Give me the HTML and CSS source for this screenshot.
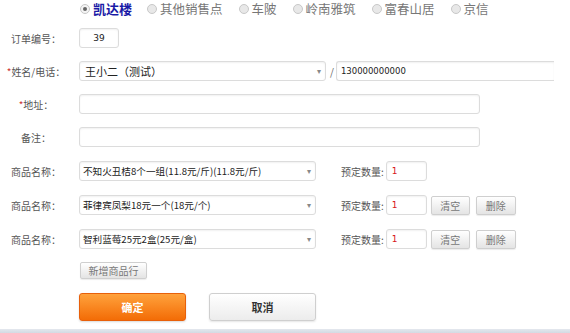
FILE: index.html
```html
<!DOCTYPE html>
<html lang="zh-CN">
<head>
    <meta charset="UTF-8">
    <meta name="viewport" content="width=device-width, initial-scale=1.0">
    <title>订单录入</title>
    <link rel="stylesheet" href="styles.css">
</head>
<body>
    <div class="order-page">
        <div class="shops">
            <label class="shop shop-on"><span class="radio"></span>凯达楼</label>
            <label class="shop"><span class="radio"></span>其他销售点</label>
            <label class="shop"><span class="radio"></span>车陂</label>
            <label class="shop"><span class="radio"></span>岭南雅筑</label>
            <label class="shop"><span class="radio"></span>富春山居</label>
            <label class="shop"><span class="radio"></span>京信</label>
        </div>

        <div class="row row-first">
            <span class="label">订单编号：</span>
            <div class="field field-no">39</div>
        </div>
        <div class="row">
            <span class="label"><i class="star">*</i>姓名/电话：</span>
            <div class="field select select-name">王小二（测试）<span class="arrow">▾</span></div>
            <span class="slash">/</span>
            <div class="field field-phone">130000000000</div>
        </div>
        <div class="row">
            <span class="label"><i class="star">*</i>地址：</span>
            <div class="field field-wide"></div>
        </div>
        <div class="row">
            <span class="label">备注：</span>
            <div class="field field-wide"></div>
        </div>

        <div class="row row-goods">
            <span class="label">商品名称：</span>
            <div class="field select select-goods">不知火丑桔8个一组(11.8元/斤)(11.8元/斤)<span class="arrow">▾</span></div>
            <span class="qty-label">预定数量:</span>
            <div class="field field-qty">1</div>
        </div>
        <div class="row row-goods">
            <span class="label">商品名称：</span>
            <div class="field select select-goods">菲律宾凤梨18元一个(18元/个)<span class="arrow">▾</span></div>
            <span class="qty-label">预定数量:</span>
            <div class="field field-qty">1</div>
            <button class="btn-small">清空</button>
            <button class="btn-small">删除</button>
        </div>
        <div class="row row-goods">
            <span class="label">商品名称：</span>
            <div class="field select select-goods">智利蓝莓25元2盒(25元/盒)<span class="arrow">▾</span></div>
            <span class="qty-label">预定数量:</span>
            <div class="field field-qty">1</div>
            <button class="btn-small">清空</button>
            <button class="btn-small">删除</button>
        </div>

        <div class="row-add">
            <button class="btn-add">新增商品行</button>
        </div>

        <div class="actions">
            <button class="btn-ok">确定</button>
            <button class="btn-cancel">取消</button>
        </div>
    </div>
    <div class="bottom-bar"></div>
</body>
</html>
```

FILE: styles.css
```css
body {
    margin: 0;
    background: #fff;
    font-family: "Noto Sans CJK SC", "Noto Sans", sans-serif;
    color: #555;
    font-size: 10px;
    overflow: hidden;
}
.order-page {
    height: 329px;
}
.shops {
    display: flex;
    height: 17px;
    padding-left: 80px;
    align-items: center;
}
.shop {
    display: flex;
    align-items: center;
    font-size: 12.5px;
    line-height: 17px;
    color: #777;
    margin-right: 16px;
}
.shop-on {
    color: #1a1aa6;
    font-weight: bold;
    font-size: 13px;
    margin-right: 15px;
}
.radio {
    width: 8px;
    height: 8px;
    border: 1px solid #c8c8c8;
    border-radius: 50%;
    background: #e8e8e8;
    margin-right: 3px;
    box-sizing: content-box;
    position: relative;
}
.shop-on .radio {
    background: #f4f4f4;
}
.shop-on .radio::after {
    content: "";
    position: absolute;
    left: 2px;
    top: 2px;
    width: 4px;
    height: 4px;
    border-radius: 50%;
    background: #666;
}
.row {
    display: flex;
    align-items: center;
    height: 20px;
    margin-top: 13px;
}
.row-first {
    margin-top: 11px;
}
.row-goods {
    margin-top: 14px;
}
.label {
    width: 72px;
    text-align: center;
    margin-right: 7px;
    color: #555;
    white-space: nowrap;
}
.star {
    font-style: normal;
    color: #c33;
}
.field {
    height: 20px;
    box-sizing: border-box;
    border: 1px solid #dcdcdc;
    border-radius: 3px;
    box-shadow: inset 0 1px 2px rgba(0, 0, 0, 0.06);
    background: #fff;
    line-height: 18px;
    padding-left: 5px;
    color: #222;
    white-space: nowrap;
    position: relative;
}
.field-no {
    width: 40px;
    text-align: center;
    padding-left: 0;
    font-family: "DejaVu Sans", sans-serif;
    font-size: 9px;
}
.select {
    font-size: 10px;
}
.select-name {
    width: 247px;
    font-size: 11px;
}
.select-goods {
    width: 237px;
    padding-left: 3px;
    font-size: 9.6px;
}
.arrow {
    position: absolute;
    right: 4px;
    top: 0;
    color: #888;
    font-size: 8px;
}
.slash {
    margin: 0 2px 0 4px;
    color: #666;
}
.field-phone {
    width: 218px;
    font-family: "DejaVu Sans", sans-serif;
    font-size: 8.5px;
    padding-left: 4px;
    border-right: none;
    border-radius: 3px 0 0 3px;
}
.field-wide {
    width: 401px;
}
.qty-label {
    margin-left: 25px;
    margin-right: 2px;
    color: #555;
}
.field-qty {
    width: 41px;
    color: #d81818;
    font-family: "DejaVu Sans", sans-serif;
    font-size: 9px;
}
.btn-small,
.btn-add {
    height: 19px;
    width: 39px;
    padding: 0;
    margin-left: 4px;
    border: 1px solid #cfcfcf;
    border-radius: 2px;
    background: linear-gradient(#ffffff, #e4e4e4);
    box-shadow: 0 1px 1px rgba(0, 0, 0, 0.08);
    font-family: inherit;
    font-size: 10px;
    color: #777;
}
.btn-small + .btn-small {
    margin-left: 6px;
    width: 40px;
}
.row-add {
    margin-top: 13px;
    padding-left: 80px;
    height: 17px;
}
.btn-add {
    margin-left: 0;
    width: 67px;
    height: 17px;
    font-size: 10px;
    line-height: 15px;
}
.actions {
    display: flex;
    gap: 23px;
    padding-left: 79px;
    margin-top: 14px;
}
.btn-ok,
.btn-cancel {
    width: 107px;
    height: 28px;
    border-radius: 3px;
    font-family: inherit;
    font-size: 11px;
    font-weight: bold;
    padding: 0;
}
.btn-ok {
    border: 1px solid #e8600a;
    background: linear-gradient(#ffa23c, #f36c06);
    color: #fff;
    box-shadow: 0 1px 2px rgba(0, 0, 0, 0.15);
}
.btn-cancel {
    border: 1px solid #cfcfcf;
    background: linear-gradient(#ffffff, #ececec);
    color: #333;
    box-shadow: 0 1px 2px rgba(0, 0, 0, 0.1);
}
.bottom-bar {
    height: 4px;
    background: linear-gradient(#e4e8ee, #d3dae3);
}
```
